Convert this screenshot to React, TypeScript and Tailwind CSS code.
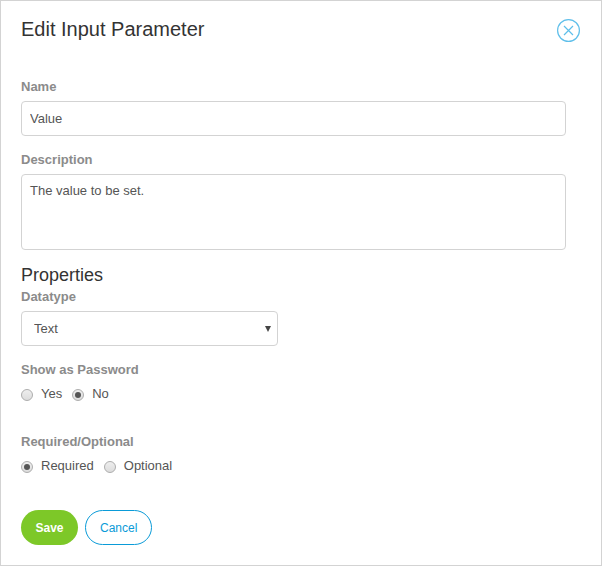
import React from "react";

const labelClass = "block text-[13px] leading-5 font-bold text-[#8b8b8b]";
const fieldClass =
  "block rounded border border-[#d3d3d3] bg-white text-[13px] text-[#555555] outline-none focus:border-[#0a9bd8]";

function RadioOption({ name, label, checked }: { name: string; label: string; checked?: boolean }) {
  return (
    <label className="flex items-center gap-2">
      <span className="grid place-items-center pt-0.5">
        <input
          type="radio"
          name={name}
          defaultChecked={checked}
          className="peer col-start-1 row-start-1 size-3 appearance-none rounded-full border border-[#adadad] bg-linear-to-b from-[#eeeeee] to-[#dcdcdc]"
        />
        <span className="pointer-events-none col-start-1 row-start-1 hidden size-1.5 rounded-full bg-[#555555] peer-checked:block" />
      </span>
      {label}
    </label>
  );
}

function RadioGroup({ name, legend, options, selected }: { name: string; legend: string; options: string[]; selected: string }) {
  return (
    <fieldset>
      <legend className={labelClass}>{legend}</legend>
      <div className="mt-1 flex gap-2.5 text-[13px] leading-5 text-[#555555]">
        {options.map((option) => (
          <RadioOption key={option} name={name} label={option} checked={option === selected} />
        ))}
      </div>
    </fieldset>
  );
}

export default function App() {
  return (
    <main
      className="min-h-screen border border-[#d3d3d3] bg-white pt-3.5 pr-[35px] pb-5 pl-5"
      style={{ fontFamily: '"Liberation Sans", Arial, sans-serif' }}
    >
      <header className="-mr-3.5 flex items-start justify-between">
        <h1 className="text-xl leading-7 text-[#333333]">Edit Input Parameter</h1>
        <button type="button" aria-label="Close" className="mt-1 text-[#5fbfea]">
          <svg className="block size-6" viewBox="0 0 24 24" fill="none" stroke="currentColor" strokeWidth="1.2">
            <circle cx="12.5" cy="11.5" r="10.9" />
            <path d="M8 7 17 16M17 7 8 16" />
          </svg>
        </button>
      </header>

      <form className="mt-[34px]" onSubmit={(event) => event.preventDefault()}>
        <label htmlFor="name" className={labelClass}>Name</label>
        <input id="name" defaultValue="Value" className={`${fieldClass} mt-1 h-[35px] w-full px-2`} />

        <label htmlFor="description" className={`${labelClass} mt-3.5`}>Description</label>
        <textarea
          id="description"
          defaultValue="The value to be set."
          className={`${fieldClass} mt-1 h-[76px] w-full resize-none px-2 py-1.5 leading-5`}
        />

        <h2 className="mt-3.5 text-lg leading-[23px] text-[#333333]">Properties</h2>
        <label htmlFor="datatype" className={labelClass}>Datatype</label>
        <div className="mt-1 grid w-[257px] items-center">
          <select id="datatype" className={`${fieldClass} col-start-1 row-start-1 h-[35px] w-full appearance-none px-3`}>
            <option>Text</option>
            <option>Number</option>
          </select>
          <svg
            className="pointer-events-none col-start-1 row-start-1 mr-[7px] h-1.5 w-1.5 justify-self-end"
            viewBox="0 0 6 6"
            fill="#444444"
          >
            <path d="M0 0H6L3 6Z" />
          </svg>
        </div>

        <div className="mt-3.5 flex flex-col gap-7">
          <RadioGroup name="password" legend="Show as Password" options={["Yes", "No"]} selected="No" />
          <RadioGroup name="required" legend="Required/Optional" options={["Required", "Optional"]} selected="Required" />
        </div>

        <div className="mt-[34px] flex gap-[7px] text-xs">
          <button type="submit" className="h-[35px] min-w-[57px] rounded-full bg-[#7dc828] px-3.5 font-bold text-white">Save</button>
          <button type="button" className="h-[35px] rounded-full border border-[#0a9bd8] px-3.5 text-[#0a9bd8]">Cancel</button>
        </div>
      </form>
    </main>
  );
}
